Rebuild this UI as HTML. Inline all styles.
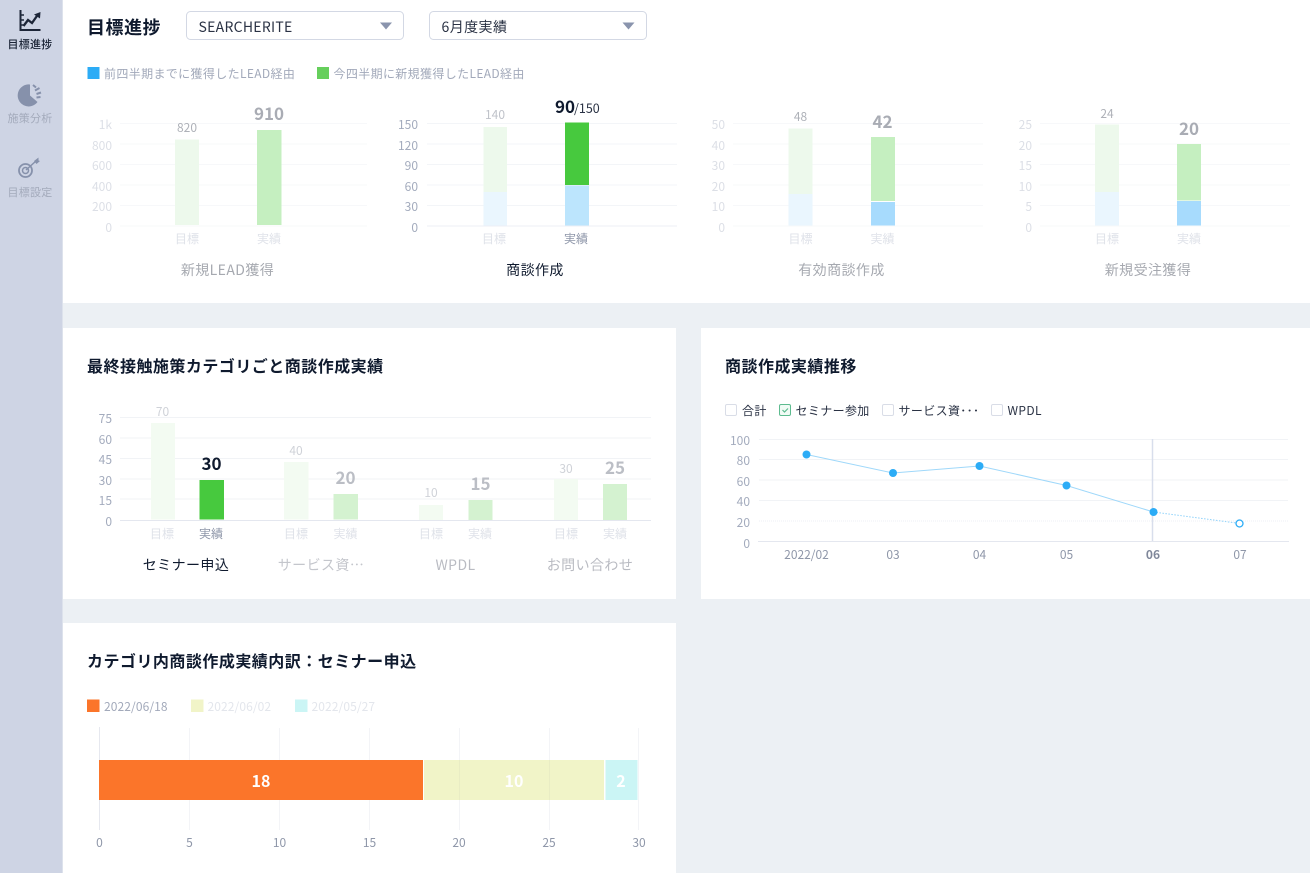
<!DOCTYPE html>
<html lang="ja"><head><meta charset="utf-8"><title>目標進捗</title>
<style>
html,body{margin:0;padding:0;background:#ecf0f4;width:1310px;height:873px;overflow:hidden}
svg{display:block;position:absolute;left:0;top:0}
text{font-family:"Noto Sans CJK JP","Liberation Sans",sans-serif}
.ya{font-size:12px;fill:#dcdfe6;text-anchor:end}
.yb{font-size:12px;fill:#a3abbd;text-anchor:end}
.xf{font-size:12px;fill:#dfe2e9;text-anchor:middle}
.xa{font-size:12px;fill:#8d95a8;text-anchor:middle}
.v{font-size:12px;fill:#bfc2c9;text-anchor:middle}
.b{font-size:17px;font-weight:700;fill:#a9acb4;text-anchor:middle}
.t{font-size:14px;fill:#a6a9b0;text-anchor:middle;letter-spacing:.03em}
.h{font-size:16px;font-weight:700;fill:#0f1a2e;letter-spacing:.03em}
.sl{font-size:11px;text-anchor:middle;fill:#a3aabb;letter-spacing:.02em}
.lg{font-size:12px;fill:#a2a9ba;letter-spacing:.03em}
.lgd{font-size:12px;fill:#a2a9ba;letter-spacing:.1px}
.ck{fill:#fff;stroke:#d9dde7;stroke-width:1}
.cl{font-size:12px;fill:#2a3244;letter-spacing:.03em}
.x{font-size:12px;fill:#8f97a9;text-anchor:middle}
</style></head><body>
<svg width="1310" height="873" viewBox="0 0 1310 873" xmlns="http://www.w3.org/2000/svg">
<rect width="1310" height="873" fill="#ecf0f4"/>
<rect width="62.500" height="873" fill="#ced4e4"/>
<rect x="63" y="0" width="1247" height="303" fill="#fff"/>
<rect x="63" y="328" width="613" height="271" fill="#fff"/>
<rect x="701" y="328" width="609" height="271" fill="#fff"/>
<rect x="63" y="623" width="613" height="250" fill="#fff"/>

<!-- sidebar -->
<g fill="none" stroke="#1d2638" stroke-width="2">
<path d="M20.500 10V30H40.500"/>
<path d="M21 15h3M21 20h3M21 25h3" stroke-width="1.500"/>
<path d="M23.500 26L28 20L32 23L38 14.500" stroke-width="2.300"/>
</g>
<path d="M34 14.500L40.500 12L40 18.500Z" fill="#1d2638"/>
<text x="30" y="48" class="sl" style="fill:#1b2436;font-weight:500">目標進捗</text>
<path d="M30 84.500V95.500L37.500 102A11 11 0 1 1 30 84.500Z" fill="#8691ab"/>
<path d="M33 85L36 87.500M35 90.500L39.500 88M36.500 94L41 92.500M36.500 97.500L40.500 97" stroke="#8691ab" stroke-width="2" fill="none"/>
<text x="30" y="122" class="sl">施策分析</text>
<g fill="none" stroke="#8691ab">
<circle cx="25.500" cy="170.500" r="6.500" stroke-width="1.800"/>
<circle cx="25.500" cy="170.500" r="3" stroke-width="1.500"/>
<path d="M26 170L36 161" stroke-width="1.500"/>
</g>
<path d="M34 161L38.500 157.500L38.500 160.500L40 161L36.500 164Z" fill="#8691ab"/>
<text x="30" y="196" class="sl">目標設定</text>

<!-- header -->
<text x="87" y="34" style="font-size:18px;font-weight:700;fill:#0f1a2e;letter-spacing:.03em">目標進捗</text>
<rect x="186.500" y="11.500" width="217" height="28" rx="4" fill="#fff" stroke="#d3d8e4"/>
<text x="198.500" y="32" style="font-size:14px;fill:#2a3244;letter-spacing:.02em">SEARCHERITE</text>
<path d="M380 22.500h12l-6 7Z" fill="#8a94ad"/>
<rect x="429.500" y="11.500" width="217" height="28" rx="4" fill="#fff" stroke="#d3d8e4"/>
<text x="441.500" y="32" style="font-size:14px;fill:#2a3244;letter-spacing:.03em">6月度実績</text>
<path d="M622.500 22.500h12l-6 7Z" fill="#8a94ad"/>

<rect x="87.500" y="67" width="12" height="12" fill="#2cacf6"/>
<text x="104" y="78" class="lg">前四半期までに獲得したLEAD経由</text>
<rect x="317" y="67" width="12" height="12" fill="#66cf5c"/>
<text x="333.500" y="78" class="lg">今四半期に新規獲得したLEAD経由</text>

<!-- chart 1 -->
<path d="M120 123.500H367M120 144H367M120 164.500H367M120 185H367M120 205.500H367M120 226H367" stroke="#f7f8fa" fill="none"/>
<g class="ya"><text x="112" y="129">1k</text><text x="112" y="150">800</text><text x="112" y="170">600</text><text x="112" y="191">400</text><text x="112" y="211">200</text><text x="112" y="232">0</text></g>
<rect x="175" y="139.500" width="24" height="85.500" fill="#edf9ec"/>
<rect x="257" y="130" width="24.500" height="95" fill="#c5efc0"/>
<text x="187" y="132" class="v" style="fill:#aeb1b8">820</text>
<text x="269" y="120" class="b">910</text>
<text x="187" y="243" class="xf">目標</text><text x="269" y="243" class="xf">実績</text>
<text x="227.500" y="275" class="t">新規LEAD獲得</text>

<!-- chart 2 -->
<path d="M427 123.500H677M427 144H677M427 164.500H677M427 185H677M427 205.500H677" stroke="#f3f5f8" fill="none"/>
<path d="M427 226H677" stroke="#eceff5"/>
<g class="yb"><text x="418" y="129">150</text><text x="418" y="150">120</text><text x="418" y="170">90</text><text x="418" y="191">60</text><text x="418" y="211">30</text><text x="418" y="232">0</text></g>
<rect x="483.500" y="127" width="23.500" height="65" fill="#edf9ec"/>
<rect x="483.500" y="192" width="23.500" height="33.500" fill="#eaf6fe"/>
<rect x="565" y="122.500" width="24" height="62.500" fill="#47c93e"/>
<rect x="565" y="185.500" width="24" height="40" fill="#bce5fd"/>
<text x="495" y="119" class="v">140</text>
<text x="555" y="113" style="font-size:17px;font-weight:700;fill:#0f1a2e">90</text>
<text x="574" y="113" style="font-size:12.500px;fill:#2a3244">/150</text>
<text x="494" y="243" class="xf">目標</text><text x="576" y="243" class="xa">実績</text>
<text x="535" y="275" class="t" style="fill:#0f1a2e">商談作成</text>

<!-- chart 3 -->
<path d="M733 123.500H983M733 144H983M733 164.500H983M733 185H983M733 205.500H983M733 226H983" stroke="#f7f8fa" fill="none"/>
<g class="ya"><text x="725" y="129">50</text><text x="725" y="150">40</text><text x="725" y="170">30</text><text x="725" y="191">20</text><text x="725" y="211">10</text><text x="725" y="232">0</text></g>
<rect x="788.500" y="128.500" width="24" height="65.500" fill="#edf9ec"/>
<rect x="788.500" y="194" width="24" height="31.500" fill="#eaf6fe"/>
<rect x="871" y="137" width="24" height="64" fill="#c5efc0"/>
<rect x="871" y="202" width="24" height="23.500" fill="#a7dbfd"/>
<text x="800.500" y="121" class="v" style="fill:#aeb1b8">48</text>
<text x="882.500" y="128" class="b">42</text>
<text x="800.500" y="243" class="xf">目標</text><text x="882.500" y="243" class="xf">実績</text>
<text x="841.500" y="275" class="t">有効商談作成</text>

<!-- chart 4 -->
<path d="M1040 123.500H1290M1040 144H1290M1040 164.500H1290M1040 185H1290M1040 205.500H1290M1040 226H1290" stroke="#f7f8fa" fill="none"/>
<g class="ya"><text x="1032" y="129">25</text><text x="1032" y="150">20</text><text x="1032" y="170">15</text><text x="1032" y="191">10</text><text x="1032" y="211">5</text><text x="1032" y="232">0</text></g>
<rect x="1095" y="124.500" width="24" height="67.500" fill="#edf9ec"/>
<rect x="1095" y="192" width="24" height="33.500" fill="#eaf6fe"/>
<rect x="1177" y="144" width="24" height="56.500" fill="#c5efc0"/>
<rect x="1177" y="201" width="24" height="24.500" fill="#a7dbfd"/>
<text x="1107" y="118" class="v" style="fill:#aeb1b8">24</text>
<text x="1189" y="135" class="b">20</text>
<text x="1107" y="243" class="xf">目標</text><text x="1189" y="243" class="xf">実績</text>
<text x="1148" y="275" class="t">新規受注獲得</text>

<!-- category chart -->
<text x="87" y="372" class="h">最終接触施策カテゴリごと商談作成実績</text>
<path d="M120 417.500H651M120 438H651M120 458.500H651M120 479H651M120 499H651" stroke="#f1f3f6" fill="none"/>
<path d="M120 520.500H651" stroke="#e4e7ef"/>
<g class="yb"><text x="112" y="423">75</text><text x="112" y="444">60</text><text x="112" y="464">45</text><text x="112" y="485">30</text><text x="112" y="505">15</text><text x="112" y="526">0</text></g>
<g fill="#f3fbf2"><rect x="151" y="423" width="24" height="96.500"/><rect x="284" y="462" width="24.500" height="57.500"/><rect x="419" y="505" width="24" height="15"/><rect x="554" y="479" width="24" height="41"/></g>
<g fill="#d4f2d0"><rect x="333.500" y="494" width="24.500" height="25.500"/><rect x="468.500" y="500" width="24" height="20"/><rect x="603" y="484" width="24" height="36"/></g>
<rect x="199.500" y="480" width="24.500" height="39.500" fill="#47c93e"/>
<text x="162.500" y="416" class="v" style="fill:#cfd2d8">70</text>
<text x="211.500" y="470" style="font-size:17px;font-weight:700;fill:#0f1a2e;text-anchor:middle">30</text>
<text x="296" y="455" class="v" style="fill:#cfd2d8">40</text>
<text x="345.500" y="484" class="b" style="fill:#bbbec5">20</text>
<text x="431" y="497" class="v" style="fill:#cfd2d8">10</text>
<text x="480.500" y="490" class="b" style="fill:#bbbec5">15</text>
<text x="566" y="473" class="v" style="fill:#cfd2d8">30</text>
<text x="615" y="474" class="b" style="fill:#bbbec5">25</text>
<text x="162" y="538" class="xf">目標</text><text x="211" y="538" class="xa">実績</text>
<text x="296" y="538" class="xf">目標</text><text x="345.500" y="538" class="xf">実績</text>
<text x="431" y="538" class="xf">目標</text><text x="480" y="538" class="xf">実績</text>
<text x="566" y="538" class="xf">目標</text><text x="615" y="538" class="xf">実績</text>
<text x="186" y="570" class="t" style="fill:#0f1a2e">セミナー申込</text>
<text x="321" y="570" class="t" style="fill:#c4c6cc">サービス資…</text>
<text x="455.500" y="570" class="t" style="fill:#b9bbc2">WPDL</text>
<text x="590" y="570" class="t" style="fill:#b9bbc2">お問い合わせ</text>

<!-- trend -->
<text x="725" y="372" class="h">商談作成実績推移</text>
<rect x="725.500" y="404.500" width="11" height="11" rx="1.500" class="ck"/>
<text x="742" y="415" class="cl">合計</text>
<rect x="779.500" y="404.500" width="11" height="11" rx="1.500" fill="#f1fbf5" stroke="#5dbb8f"/>
<path d="M782.500 410l2 2 3.500-3.500" fill="none" stroke="#5dbb8f" stroke-width="1.200"/>
<text x="795.500" y="415" class="cl">セミナー参加</text>
<rect x="882.500" y="404.500" width="11" height="11" rx="1.500" class="ck"/>
<text x="898.500" y="415" class="cl">サービス資･･･</text>
<rect x="991.500" y="404.500" width="11" height="11" rx="1.500" class="ck"/>
<text x="1007.500" y="415" class="cl">WPDL</text>
<path d="M759 439.500H1288M759 459.500H1288M759 480H1288M759 500.500H1288" stroke="#f1f3f6" fill="none"/>
<path d="M759 521H1288" stroke="#eceff4" stroke-dasharray="1 1" fill="none"/>
<path d="M758 541.500H1289" stroke="#e4e7ef"/>
<path d="M1152.500 439V541" stroke="#d8deec" stroke-width="1.500"/>
<g style="font-size:12px;fill:#a3abbd;text-anchor:end"><text x="750" y="445">100</text><text x="750" y="465">80</text><text x="750" y="486">60</text><text x="750" y="506">40</text><text x="750" y="527">20</text><text x="750" y="548">0</text></g>
<path d="M806.500 454.500L893 473L979.500 466L1066.500 485.500L1153.500 512" fill="none" stroke="#9fd8fa" stroke-width="1"/>
<path d="M1153.500 512L1240 523.500" fill="none" stroke="#8fd2fa" stroke-width="1" stroke-dasharray="1.500 1.500"/>
<g fill="#2cacf6"><circle cx="806.500" cy="454.500" r="4"/><circle cx="893" cy="473" r="4"/><circle cx="979.500" cy="466" r="4"/><circle cx="1066.500" cy="485.500" r="4"/><circle cx="1153.500" cy="512" r="4"/></g>
<circle cx="1239.500" cy="523.500" r="3.500" fill="#fff" stroke="#2cacf6" stroke-width="1.300"/>
<text x="806.500" y="559" class="x">2022/02</text><text x="893" y="559" class="x">03</text><text x="979.500" y="559" class="x">04</text><text x="1066.500" y="559" class="x">05</text><text x="1153" y="559" class="x" style="font-weight:700;fill:#7f879a">06</text><text x="1240" y="559" class="x">07</text>

<!-- breakdown -->
<text x="87" y="667" class="h">カテゴリ内商談作成実績内訳：セミナー申込</text>
<rect x="87" y="699.500" width="12.500" height="12.500" fill="#fb752a"/>
<text x="104" y="711" class="lgd">2022/06/18</text>
<rect x="191" y="699.500" width="12.500" height="12.500" fill="#f1f4c8"/>
<text x="207.500" y="711" class="lgd" style="fill:#e3e6ec">2022/06/02</text>
<rect x="295" y="699.500" width="12.500" height="12.500" fill="#cbf5f5"/>
<text x="311.500" y="711" class="lgd" style="fill:#e3e6ec">2022/05/27</text>
<path d="M99.500 727V830" stroke="#e6e8ef"/>
<path d="M189.500 728V830M279.500 728V830M369.500 728V830M459.500 728V830M549.500 728V830M638.500 728V830" stroke="#f3f4f7"/>
<rect x="99" y="760" width="324" height="40" fill="#fb752a"/>
<rect x="424" y="760" width="180" height="40" fill="#f1f4c8"/>
<rect x="605.500" y="760" width="32" height="40" fill="#cbf5f5"/>
<path d="M459.500 760V800M549.500 760V800" stroke="#e9ecc4"/>
<g style="font-size:16px;font-weight:700;fill:#fff;text-anchor:middle"><text x="261" y="787">18</text><text x="514" y="787">10</text><text x="621" y="787">2</text></g>
<g class="x"><text x="99.500" y="847">0</text><text x="189.500" y="847">5</text><text x="279.500" y="847">10</text><text x="369.500" y="847">15</text><text x="459" y="847">20</text><text x="549" y="847">25</text><text x="639" y="847">30</text></g>
</svg>
</body></html>
